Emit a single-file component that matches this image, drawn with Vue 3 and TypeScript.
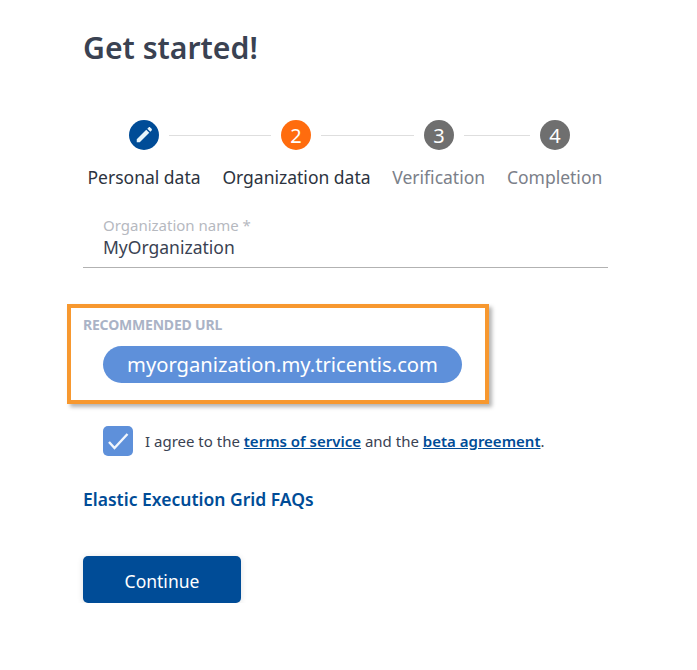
<script setup lang="ts">
type Step = { label: string; mark: string; state: 'done' | 'active' | 'todo'; line: number }

const steps: Step[] = [
  { label: 'Personal data', mark: '', state: 'done', line: 102 },
  { label: 'Organization data', mark: '2', state: 'active', line: 93 },
  { label: 'Verification', mark: '3', state: 'todo', line: 66 },
  { label: 'Completion', mark: '4', state: 'todo', line: 0 },
]
</script>

<template>
  <main class="page">
    <h1 class="title">Get started!</h1>

    <div class="marks">
      <template v-for="step in steps" :key="step.label">
        <span class="mark" :class="step.state">
          <svg v-if="step.state === 'done'" width="18" height="18" viewBox="1.5 1 15.5 15.5">
            <path fill="#e6f4fb" d="M3 12.4 11.2 4.2 13.8 6.8 5.6 15H3Z" />
            <path fill="#e6f4fb" d="M12.1 3.3 13.2 2.2C13.6 1.8 14.2 1.8 14.6 2.2L15.8 3.4C16.2 3.8 16.2 4.4 15.8 4.8L14.7 5.9Z" />
          </svg>
          <template v-else>{{ step.mark }}</template>
        </span>
        <span v-if="step.line" class="line" :style="{ width: step.line + 'px' }"></span>
      </template>
    </div>

    <div class="labels">
      <span v-for="step in steps" :key="step.label" class="label" :class="step.state">{{ step.label }}</span>
    </div>

    <div class="field">
      <div class="field-label">Organization name *</div>
      <div class="field-value">MyOrganization</div>
    </div>

    <section class="url-box">
      <div class="url-title">RECOMMENDED URL</div>
      <div class="url-pill">myorganization.my.tricentis.com</div>
    </section>

    <div class="agree">
      <span class="check">
        <svg width="30" height="30" viewBox="0 0 30 30">
          <path d="M6 16 11.5 22 24.5 8" fill="none" stroke="#f2f6fc" stroke-width="2.4" />
        </svg>
      </span>
      <span class="agree-text">
        I agree to the <a href="#">terms of service</a> and the <a href="#">beta agreement</a>.
      </span>
    </div>

    <a class="faq" href="#">Elastic Execution Grid FAQs</a>

    <button type="button" class="continue">Continue</button>
  </main>
</template>

<style scoped>
.page {
  width: 525px;
  padding: 27px 0 0 83px;
  font-family: 'Noto Sans', sans-serif;
  color: #333a47;
}

.title {
  margin: 0;
  font-size: 30.2px;
  line-height: 42px;
  font-weight: 600;
  color: #3a4252;
}

.marks {
  display: flex;
  align-items: center;
  gap: 10px;
  margin: 51px 0 0 46px;
}

.mark {
  display: flex;
  align-items: center;
  justify-content: center;
  width: 30px;
  height: 30px;
  flex: none;
  border-radius: 50%;
  color: #fff;
  font-size: 20px;
}

.mark.done {
  background: #004c97;
}

.mark.active {
  background: #ff6c0e;
}

.mark.todo {
  background: #6f6f6f;
}

.line {
  height: 1px;
  background: #dedede;
}

.labels {
  display: flex;
  gap: 21.8px;
  margin: 15px 0 0 4.5px;
  font-size: 17.5px;
  line-height: 24px;
  white-space: nowrap;
}

.label {
  color: #2c3340;
}

.label.todo {
  color: #7b8089;
}

.field {
  margin-top: 26px;
  padding: 0 20px 8px;
  border-bottom: 1px solid #b2b2b2;
}

.field-label {
  font-size: 15px;
  line-height: 20px;
  color: #b6b9bf;
}

.field-value {
  font-size: 17.5px;
  line-height: 24px;
  color: #3a4252;
}

.url-box {
  width: 414px;
  height: 92px;
  box-sizing: content-box;
  margin: 36px 0 0 -16px;
  border: 4px solid #f7982f;
  box-shadow: 3px 3px 4px rgba(0, 0, 0, 0.3);
}

.url-title {
  margin: 8px 0 0 12px;
  font-size: 14px;
  line-height: 18px;
  font-weight: 700;
  letter-spacing: -0.2px;
  color: #aab3c6;
}

.url-pill {
  width: 359px;
  height: 37px;
  margin: 12px 0 0 32px;
  border-radius: 19px;
  background: #5e90da;
  color: #fff;
  font-size: 20.2px;
  line-height: 37px;
  text-align: center;
}

.agree {
  display: flex;
  align-items: center;
  gap: 12px;
  margin: 22px 0 0 20px;
}

.check {
  width: 30px;
  height: 30px;
  border-radius: 5px;
  background: #5e90da;
}

.check svg {
  display: block;
}

.agree-text {
  font-size: 15px;
  line-height: 20px;
  color: #3a4252;
}

.agree-text a {
  color: #004c97;
  font-weight: 600;
}

.faq {
  display: block;
  margin-top: 31px;
  font-size: 17.5px;
  line-height: 24px;
  font-weight: 600;
  color: #004c97;
  text-decoration: none;
}

.continue {
  display: block;
  width: 158px;
  height: 47px;
  margin-top: 45px;
  padding: 2px 0 0;
  border: 0;
  border-radius: 5px;
  background: #004c97;
  box-shadow: 0 1px 6px rgba(0, 0, 0, 0.12);
  color: #fff;
  font-family: inherit;
  font-size: 17.5px;
}
</style>
